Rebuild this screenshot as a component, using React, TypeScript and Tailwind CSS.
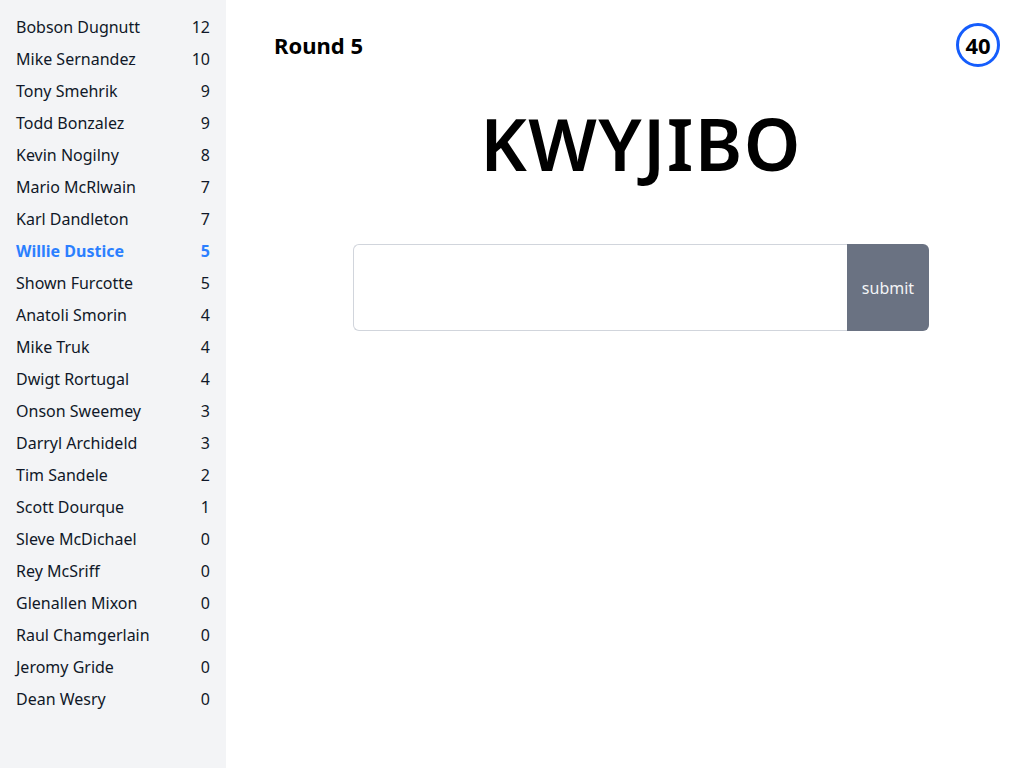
import React from "react";

const players: [string, number][] = [
  ["Bobson Dugnutt", 12],
  ["Mike Sernandez", 10],
  ["Tony Smehrik", 9],
  ["Todd Bonzalez", 9],
  ["Kevin Nogilny", 8],
  ["Mario McRlwain", 7],
  ["Karl Dandleton", 7],
  ["Willie Dustice", 5],
  ["Shown Furcotte", 5],
  ["Anatoli Smorin", 4],
  ["Mike Truk", 4],
  ["Dwigt Rortugal", 4],
  ["Onson Sweemey", 3],
  ["Darryl Archideld", 3],
  ["Tim Sandele", 2],
  ["Scott Dourque", 1],
  ["Sleve McDichael", 0],
  ["Rey McSriff", 0],
  ["Glenallen Mixon", 0],
  ["Raul Chamgerlain", 0],
  ["Jeromy Gride", 0],
  ["Dean Wesry", 0],
];

export default function App() {
  return (
    <div
      className="flex h-[768px] w-[1024px] bg-white text-black"
      style={{ fontFamily: '"Noto Sans", "Open Sans", sans-serif' }}
    >
      <aside className="w-[226px] shrink-0 bg-gray-100 px-4 py-[11px]">
        <ul>
          {players.map(([name, score]) => {
            const me = name === "Willie Dustice";
            return (
              <li
                key={name}
                className={
                  me
                    ? "flex h-8 items-center justify-between text-base font-bold text-blue-500"
                    : "flex h-8 items-center justify-between text-base text-gray-900"
                }
              >
                <span>{name}</span>
                <span>{score}</span>
              </li>
            );
          })}
        </ul>
      </aside>
      <main className="flex flex-1 flex-col pl-12 pr-6 pt-[23px]">
        <header className="flex h-11 items-center justify-between">
          <h1 className="text-[22px] font-bold">Round 5</h1>
          <div className="flex h-11 w-11 items-center justify-center rounded-full border-[3px] border-blue-600 text-[22px] font-bold">
            40
          </div>
        </header>
        <div className="mt-10 pl-2 text-center text-7xl font-semibold leading-none tracking-[0.02em]">
          KWYJIBO
        </div>
        <div className="ml-[79px] mt-[65px] flex h-[87px] w-[576px]">
          <input
            type="text"
            className="flex-1 rounded-l-md border border-r-0 border-gray-300 bg-white px-3 outline-none"
          />
          <button className="w-[82px] rounded-r-md bg-gray-500 text-base text-gray-100">
            submit
          </button>
        </div>
      </main>
    </div>
  );
}
